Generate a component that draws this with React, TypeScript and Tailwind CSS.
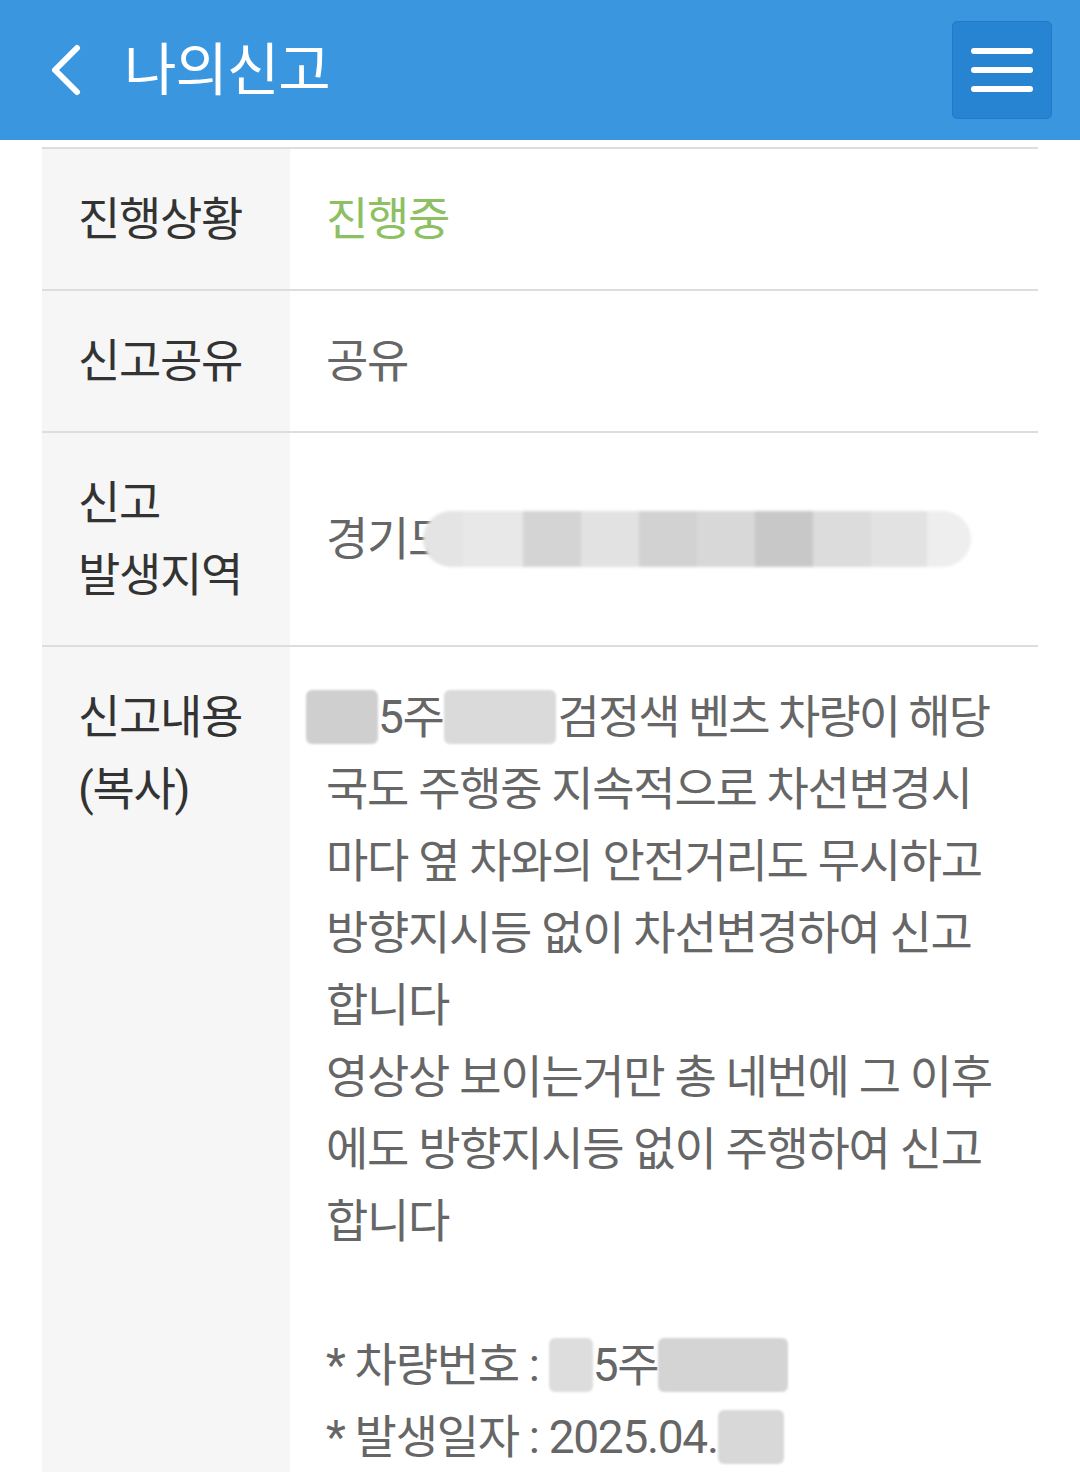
import React from 'react';

const FONT = { fontFamily: 'Roboto, "Noto Sans CJK KR", sans-serif' };

function Blur({ w, tone = 'bg-[#d6d6d6]', className = '' }: { w: string; tone?: string; className?: string }) {
  return <span className={`inline-block h-[54px] align-middle ${w} ${tone} blur-[1px] rounded-[6px] ${className}`} />;
}

function Row({ label, children, top = false }: { label: React.ReactNode; children: React.ReactNode; top?: boolean }) {
  return (
    <div className="grid grid-cols-[248px_1fr] border-b-2 border-[#dddddd]">
      <div className="bg-[#f6f6f6] px-[36px] py-[34px] text-[#333333]">{label}</div>
      <div className={`flex px-[36px] py-[34px] text-[#666666] ${top ? 'items-start' : 'items-center'}`}>
        <div>{children}</div>
      </div>
    </div>
  );
}

export default function App() {
  const lines = [
    '국도 주행중 지속적으로 차선변경시',
    '마다 옆 차와의 안전거리도 무시하고',
    '방향지시등 없이 차선변경하여 신고',
    '합니다',
    '영상상 보이는거만 총 네번에 그 이후',
    '에도 방향지시등 없이 주행하여 신고',
    '합니다',
  ];

  return (
    <div className="min-h-[1472px] bg-white" style={FONT}>
      {/* header */}
      <div className="flex h-[140px] items-center justify-between bg-[#3a97df] pl-[44px] pr-[28px]">
        <div className="flex items-center gap-[40px]">
          <svg width="40" height="56" viewBox="0 0 40 56" fill="none">
            <path d="M33 6 L11 28 L33 50" stroke="white" strokeWidth="6" strokeLinecap="round" strokeLinejoin="round" />
          </svg>
          <span className="text-[57px] leading-none text-white tracking-[-1px]">나의신고</span>
        </div>
        <button className="flex h-[98px] w-[100px] flex-col items-center justify-center gap-[13px] rounded-[5px] border border-[#2479c6] bg-[#2684d3]">
          <span className="block h-[6px] w-[62px] rounded-full bg-white" />
          <span className="block h-[6px] w-[62px] rounded-full bg-white" />
          <span className="block h-[6px] w-[62px] rounded-full bg-white" />
        </button>
      </div>

      {/* table */}
      <div className="ml-[42px] mt-[7px] w-[996px] border-t-2 border-[#dddddd] text-[46px] leading-[72px] tracking-[-1.3px]">
        <Row label="진행상황">
          <span className="text-[#8cc063]">진행중</span>
        </Row>
        <Row label="신고공유">공유</Row>
        <Row
          label={
            <>
              신고
              <br />
              발생지역
            </>
          }
        >
          <div className="flex items-center whitespace-nowrap">
            <span>경기도</span>
            <span className="-ml-[26px] flex h-[56px] items-stretch blur-[1.5px]">
              <span className="w-[40px] rounded-l-full bg-[#e4e4e4]" />
              <span className="w-[60px] bg-[#e8e8e8]" />
              <span className="w-[58px] bg-[#d4d4d4]" />
              <span className="w-[58px] bg-[#e2e2e2]" />
              <span className="w-[58px] bg-[#d2d2d2]" />
              <span className="w-[58px] bg-[#d8d8d8]" />
              <span className="w-[58px] bg-[#c8c8c8]" />
              <span className="w-[58px] bg-[#dcdcdc]" />
              <span className="w-[56px] bg-[#e2e2e2]" />
              <span className="w-[44px] rounded-r-full bg-[#eeeeee]" />
            </span>
          </div>
        </Row>
        <Row
          top
          label={
            <>
              신고내용
              <br />
              (복사)
            </>
          }
        >
          <div className="whitespace-nowrap">
            <div className="-ml-[20px] flex items-center">
              <Blur w="w-[72px]" tone="bg-[#cfcfcf]" className="h-[40px]" />
              <span>5주</span>
              <Blur w="w-[112px]" tone="bg-[#dadada]" className="h-[40px]" />
              <span className="ml-[2px] tracking-[-2px]">검정색 벤츠 차량이 해당</span>
            </div>
            {lines.map((l, i) => (
              <div key={l + i}>{l}</div>
            ))}
            <div className="h-[72px]" />
            <div className="flex items-center">
              <span>* 차량번호 :&nbsp;</span>
              <Blur w="w-[44px]" tone="bg-[#dddddd]" className="h-[50px]" />
              <span>5주</span>
              <Blur w="w-[130px]" tone="bg-[#d4d4d4]" className="h-[44px]" />
            </div>
            <div className="flex items-center">
              <span>* 발생일자 : 2025.04.</span>
              <Blur w="w-[66px]" tone="bg-[#d8d8d8]" className="h-[46px]" />
            </div>
          </div>
        </Row>
      </div>
    </div>
  );
}
